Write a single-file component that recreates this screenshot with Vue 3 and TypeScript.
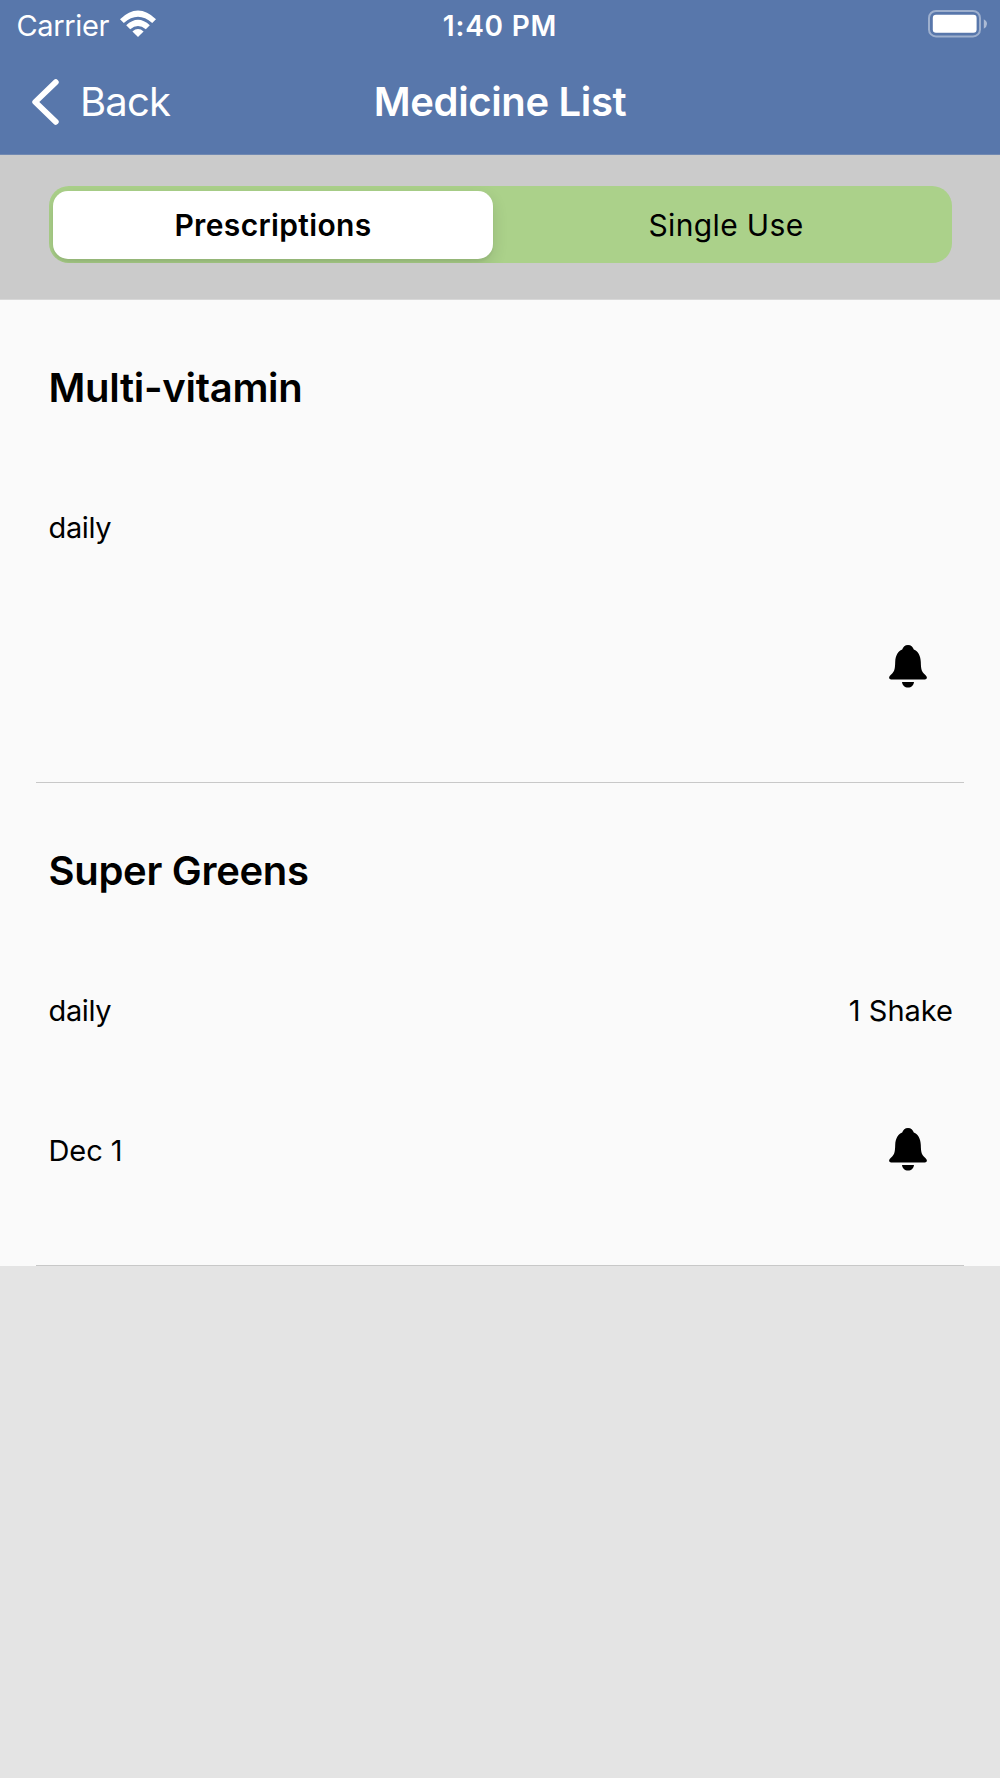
<script setup lang="ts">
import { ref } from 'vue'

interface Medicine {
  name: string
  frequency: string
  dose: string
  date: string
}

const tabs: string[] = ['Prescriptions', 'Single Use']
const selected = ref(0)
const medicines: Medicine[] = [
  { name: 'Multi-vitamin', frequency: 'daily', dose: '', date: '' },
  { name: 'Super Greens', frequency: 'daily', dose: '1 Shake', date: 'Dec 1' },
]
</script>

<template>
  <div class="screen">
    <header class="header">
      <div class="status">
        <div class="status-left">
          <span class="carrier">Carrier</span>
          <svg class="wifi" width="38" height="28" viewBox="0 0 38 28">
            <path d="M1 9.2Q19 -8.2 37 9.2L33.2 13Q19 0.4 4.8 13Z" />
            <path d="M7.2 15.2Q19 4.2 30.8 15.2L26.8 19.2Q19 12.6 11.2 19.2Z" />
            <path d="M13.4 21.4Q19 16.6 24.6 21.4L19 27Z" />
          </svg>
        </div>
        <span class="time">1:40 PM</span>
        <div class="status-right">
          <svg class="battery" width="60" height="28" viewBox="0 0 60 28">
            <rect x="1" y="1" width="51" height="25.4" rx="7" fill="none" stroke="#fff" stroke-opacity=".42" stroke-width="2" />
            <rect x="4.8" y="4.8" width="43.8" height="18" rx="3.2" fill="#fff" />
            <path d="M55.8 9.2Q59 11 59 13.9T55.8 18.8Z" fill="#fff" fill-opacity=".5" />
          </svg>
        </div>
      </div>
      <div class="nav">
        <button class="back" type="button">
          <svg width="28" height="48" viewBox="0 0 28 48">
            <path d="M24.8 4.2L4.2 24L24.8 43.8" fill="none" stroke="#fff" stroke-width="5.8" stroke-linecap="round" stroke-linejoin="round" />
          </svg>
          <span class="back-label">Back</span>
        </button>
        <h1 class="title">Medicine List</h1>
        <span></span>
      </div>
    </header>

    <div class="filter">
      <div class="segments">
        <button
          v-for="(tab, i) in tabs"
          :key="tab"
          type="button"
          class="segment"
          :class="{ active: selected === i }"
          @click="selected = i"
        ><span>{{ tab }}</span></button>
      </div>
    </div>

    <main class="list">
      <section v-for="m in medicines" :key="m.name" class="item">
        <h2 class="name">{{ m.name }}</h2>
        <div class="row">
          <span class="frequency">{{ m.frequency }}</span>
          <span>{{ m.dose }}</span>
        </div>
        <div class="row">
          <span class="date">{{ m.date }}</span>
          <svg class="bell" width="38" height="43" viewBox="0 0 38 43">
            <path d="M19 0C15.9 0 14.2 1.7 13.2 4.6C8.8 6.6 6.5 10.5 6.2 17C6 23.5 5.6 26.2 3.2 28.4C1.3 30.1 .1 31.2 .1 32.6C.1 33.8 1 34.5 2.2 34.5H35.8C37 34.5 37.9 33.8 37.9 32.6C37.9 31.2 36.7 30.1 34.8 28.4C32.4 26.2 32 23.5 31.8 17C31.5 10.5 29.2 6.6 24.8 4.6C23.8 1.7 22.1 0 19 0Z" />
            <path d="M13 37H25C24.6 40.4 22.3 42.6 19 42.6S13.4 40.4 13 37Z" />
          </svg>
        </div>
      </section>
    </main>
  </div>
</template>

<style>
body {
  margin: 0;
  background: #e4e4e4;
}
</style>

<style scoped>
.screen {
  width: 1000px;
  height: 1778px;
  overflow: hidden;
  background: #e4e4e4;
  font-family: Inter, "Liberation Sans", sans-serif;
  color: #000;
}
button {
  border: 0;
  padding: 0;
  background: none;
  font: inherit;
  color: inherit;
}
.header {
  box-sizing: border-box;
  height: 155px;
  background: #5877ab;
  border-bottom: 1px solid #7189b2;
  color: #fff;
}
.status {
  display: grid;
  grid-template-columns: 1fr auto 1fr;
  height: 50px;
  font-size: 29px;
  line-height: 52px;
}
.status-left {
  display: flex;
  align-items: flex-start;
  padding-left: 16.5px;
}
.carrier {
  width: 102.5px;
  white-space: nowrap;
  letter-spacing: -0.35px;
}
.wifi {
  margin-top: 10px;
  fill: #fff;
}
.time {
  font-weight: 600;
  font-size: 28px;
  letter-spacing: 0.8px;
}
.status-right {
  display: flex;
  justify-content: flex-end;
  padding-right: 12px;
}
.battery {
  margin-top: 10px;
}
.nav {
  display: grid;
  grid-template-columns: 1fr auto 1fr;
  align-items: center;
  height: 103px;
}
.back {
  display: flex;
  align-items: center;
  padding-left: 31px;
}
.back-label {
  margin-left: 21px;
  padding-bottom: 1px;
  font-size: 40px;
  letter-spacing: -0.8px;
}
.title {
  margin: 0;
  padding-bottom: 1px;
  font-size: 40px;
  font-weight: 600;
  letter-spacing: -0.35px;
}
.filter {
  box-sizing: border-box;
  height: 145px;
  padding: 31px 48.5px 0;
  background: #cbcbcb;
  border-bottom: 1px solid #d8d8d8;
}
.segments {
  box-sizing: border-box;
  display: flex;
  gap: 13px;
  height: 77px;
  padding: 5px 4.5px;
  border-radius: 20px;
  background: #abd18a;
  overflow: hidden;
}
.segment {
  flex: 0 0 440px;
  height: 67.5px;
  border-radius: 15px;
  font-size: 30px;
  letter-spacing: 0.35px;
}
.segment.active {
  background: #fff;
  font-weight: 600;
  box-shadow: 0 6px 16px rgba(0, 0, 0, 0.12), 0 3px 2px rgba(0, 0, 0, 0.04);
}
.list {
  background: #fafafa;
}
.item {
  box-sizing: border-box;
  height: 483px;
  margin: 0 36px;
  padding: 60px 11px 0 12.5px;
  border-bottom: 1px solid #c8c8c8;
}
.name {
  margin: 0 0 41px;
  font-size: 40px;
  line-height: 56px;
  font-weight: 600;
  letter-spacing: -0.3px;
}
.row {
  display: flex;
  justify-content: space-between;
  align-items: center;
  height: 140px;
  font-size: 29px;
}
.frequency {
  letter-spacing: -0.35px;
}
.date {
  padding-top: 1px;
  letter-spacing: -0.1px;
}
.row + .row {
  height: 139px;
}
.bell {
  margin-right: 26px;
}
</style>
